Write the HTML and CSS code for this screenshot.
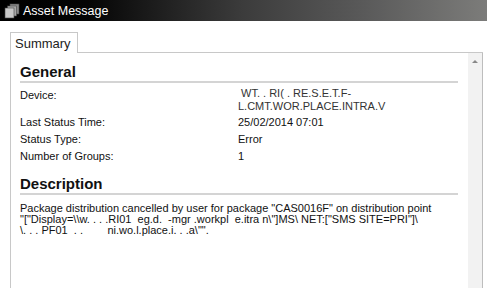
FILE: index.html
```html
<!DOCTYPE html>
<html lang="en">
<head>
    <meta charset="UTF-8">
    <title>Asset Message</title>
    <link rel="stylesheet" href="styles.css">
</head>
<body>
    <div class="titlebar">
        <svg class="title-icon" width="16" height="16" viewBox="0 0 16 16">
            <rect x="6" y="1" width="9" height="10" fill="#8a8a8a" stroke="#444" stroke-width="0.6"/>
            <rect x="3.5" y="3" width="9" height="10" fill="#a8a8a8" stroke="#444" stroke-width="0.6"/>
            <rect x="1" y="5" width="9" height="10" fill="#c8c8c8" stroke="#444" stroke-width="0.6"/>
        </svg>
        <span class="title">Asset Message</span>
    </div>

    <div class="window">
        <div class="tabs">
            <div class="tab">Summary</div>
        </div>
        <div class="panel">
            <div class="content">
                <h2>General</h2>
                <div class="props">
                    <div class="label">Device:</div>
                    <div class="value device">&nbsp;WT. . RI( . RE.S.E.T.F-<br>L.CMT.WOR.PLACE.INTRA.V</div>
                    <div class="label">Last Status Time:</div>
                    <div class="value">25/02/2014 07:01</div>
                    <div class="label">Status Type:</div>
                    <div class="value">Error</div>
                    <div class="label">Number of Groups:</div>
                    <div class="value">1</div>
                </div>
                <h2>Description</h2>
                <p class="desc">Package distribution cancelled by user for package "CAS0016F" on distribution point<br>"["Display=\\w. . . .RI01 &nbsp;eg.d. &nbsp;-mgr .workpl &nbsp;e.itra n\"]MS\ NET:["SMS SITE=PRI"]\<br>\. . . PF01 &nbsp;. . &nbsp; &nbsp; &nbsp; &nbsp;ni.wo.l.place.i. . .a\"".</p>
            </div>
            <div class="scrollbar">
                <span class="arrow"></span>
            </div>
        </div>
    </div>
</body>
</html>
```

FILE: styles.css
```css
body {
    margin: 0;
    background: #fff;
    font-family: Tahoma, 'Liberation Sans', sans-serif;
    font-size: 11px;
    color: #000;
    overflow: hidden;
    height: 288px;
}

.titlebar {
    height: 21px;
    display: flex;
    align-items: center;
    padding-left: 4px;
    background: linear-gradient(to right, #000 0%, #050505 18%, #3c3c3c 50%, #5a5a5a 75%, #7c7c7a 100%);
}

.title-icon {
    margin-right: 3px;
}

.title {
    color: #fff;
    font-size: 12.5px;
}

.window {
    padding: 10px 4px 0 10px;
}

.tabs {
    display: flex;
}

.tab {
    width: 68px;
    height: 21px;
    box-sizing: border-box;
    padding: 3px 0 0 4px;
    border: 1px solid #c8c8c8;
    border-bottom: none;
    background: #fff;
    font-size: 13px;
    color: #222;
    position: relative;
    top: 1px;
}

.panel {
    display: flex;
    height: 240px;
    border-top: 1px solid #c8c8c8;
    border-left: 1px solid #c8c8c8;
}

.content {
    flex: 1;
    padding: 10px 10px 0 9px;
}

h2 {
    margin: 0;
    padding-bottom: 1px;
    font-size: 15px;
    font-weight: bold;
    color: #111;
    border-bottom: 2px solid #d4d4d4;
    line-height: 17px;
}

.props {
    display: grid;
    grid-template-columns: 218px 1fr;
    padding: 4px 0 10px;
    line-height: 17px;
    color: #111;
}

.value.device {
    line-height: 13px;
    color: #333;
    margin-bottom: 1px;
}

.desc {
    margin: 8px 0 0;
    line-height: 11px;
    color: #111;
    white-space: nowrap;
}

.scrollbar {
    width: 15px;
    background: #f2f2f2;
    border-right: 1px solid #bdbdbd;
    display: flex;
    justify-content: center;
    padding-top: 7px;
    box-sizing: border-box;
}

.arrow {
    width: 0;
    height: 0;
    border-left: 3px solid transparent;
    border-right: 3px solid transparent;
    border-bottom: 3px solid #888;
}
```
